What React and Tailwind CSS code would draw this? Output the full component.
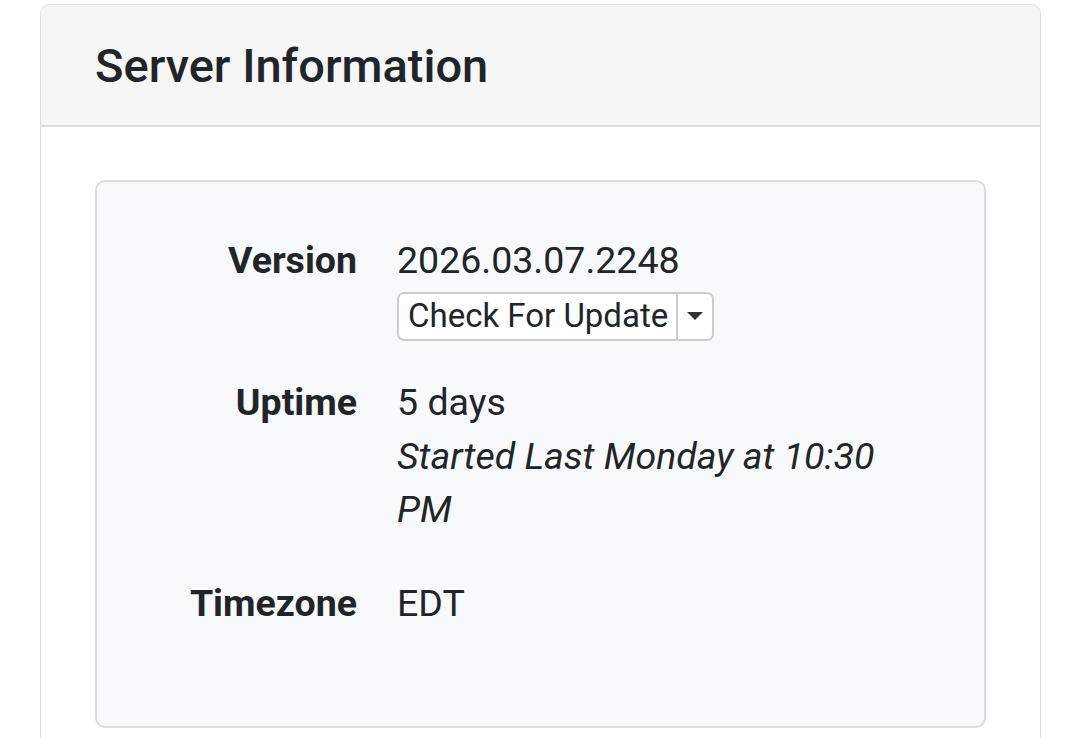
export default function App() {
  const font = { fontFamily: 'Roboto, "Liberation Sans", sans-serif' };
  return (
    <div className="w-[1080px] h-[738px] bg-white overflow-hidden text-[#212529]" style={font}>
      <div className="ml-[40px] mt-[4px] w-[1001px] h-[780px] border border-[#dcdcdc] rounded-[10px] overflow-hidden">
        <div className="h-[122px] bg-[#f6f6f6] border-b-2 border-[#dcdcdc] flex items-center pl-[54px]">
          <h5 className="text-[47px] font-medium leading-none mt-[0px]">Server Information</h5>
        </div>
        <div className="px-[54px] pt-[53px]">
          <div className="h-[548px] bg-[#f8f9fa] border-2 border-[#dcdcdc] rounded-[10px] pt-[52px]">
            <div className="grid grid-cols-[260px_1fr] gap-x-[40px] text-[37.5px] leading-[53.5px]">
              <div className="text-right font-bold">Version</div>
              <div>
                <div>2026.03.07.2248</div>
                <div className="mt-[3px] inline-flex h-[49px] border-2 border-[#cccccc] rounded-[7px] bg-white overflow-hidden">
                  <span className="pl-[9px] pr-[8px] text-[33px] leading-[44px] border-r-2 border-[#cccccc]">Check For Update</span>
                  <span className="w-[34px] flex items-center justify-center">
                    <span className="w-0 h-0 border-l-[8px] border-r-[8px] border-t-[8px] border-l-transparent border-r-transparent border-t-[#333]"></span>
                  </span>
                </div>
              </div>
              <div className="text-right font-bold mt-[35px]">Uptime</div>
              <div className="mt-[35px] w-[500px]">
                <div>5 days</div>
                <div className="italic">Started Last Monday at 10:30 PM</div>
              </div>
              <div className="text-right font-bold mt-[40px]">Timezone</div>
              <div className="mt-[40px]">EDT</div>
            </div>
          </div>
        </div>
      </div>
    </div>
  );
}
